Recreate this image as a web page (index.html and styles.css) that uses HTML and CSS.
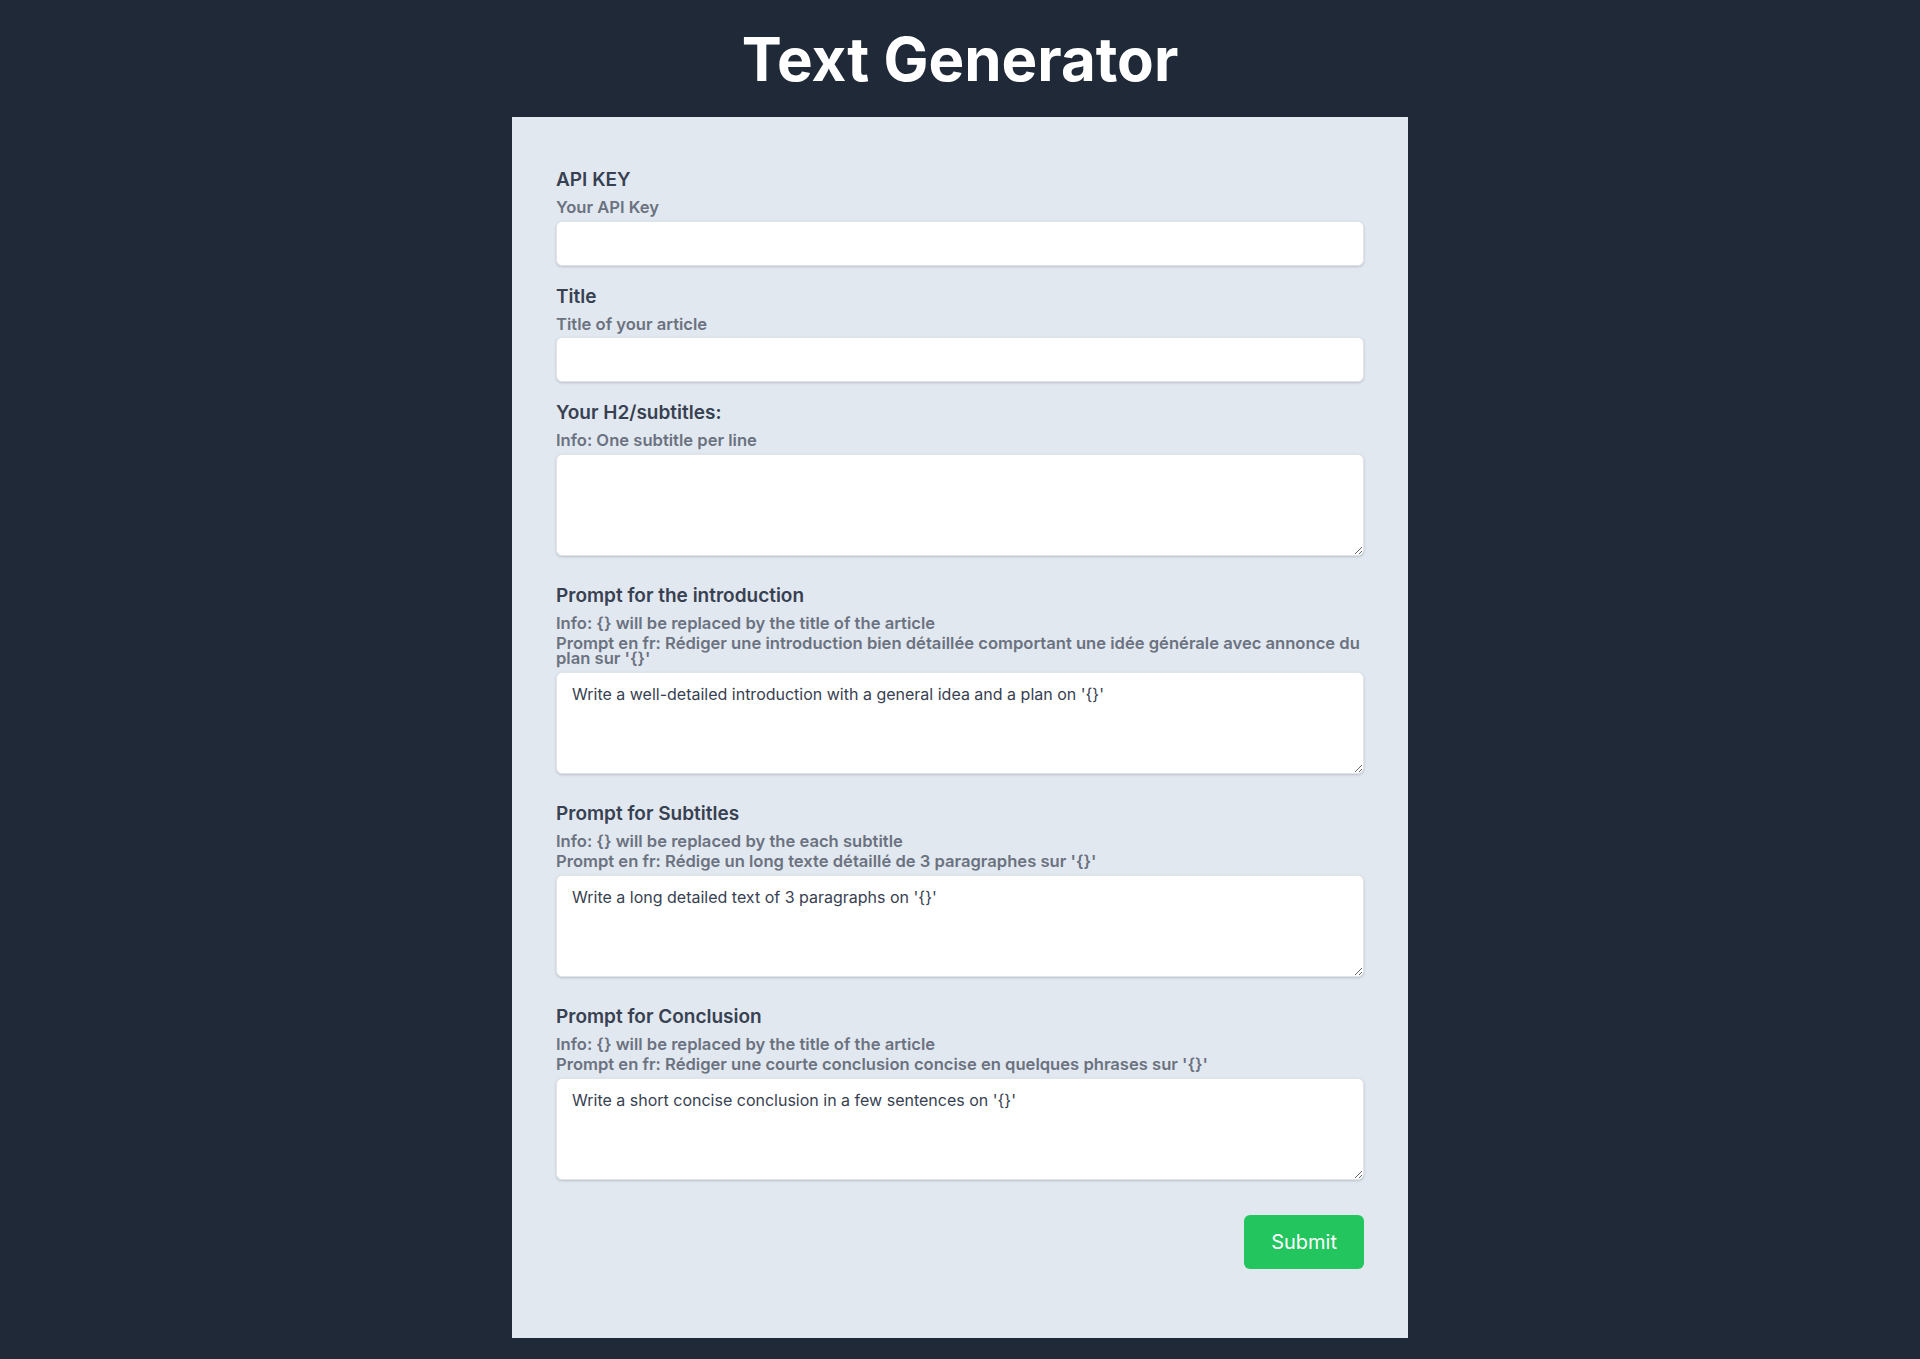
FILE: index.html
```html
<!DOCTYPE html>
<html lang="en">
<head>
<meta charset="utf-8">
<title>Text Generator</title>
<link rel="stylesheet" href="styles.css">
</head>
<body>
<main class="page">
  <h1 class="title">Text Generator</h1>
  <form class="card">
    <div class="field">
      <label class="label" for="apikey">API KEY</label>
      <p class="sub">Your API Key</p>
      <input class="input" id="apikey" type="text">
    </div>
    <div class="field">
      <label class="label" for="title">Title</label>
      <p class="sub">Title of your article</p>
      <input class="input" id="title" type="text">
    </div>
    <div class="field">
      <label class="label" for="h2">Your H2/subtitles:</label>
      <p class="sub">Info: One subtitle per line</p>
      <textarea class="area" id="h2"></textarea>
    </div>
    <div class="field">
      <label class="label" for="intro">Prompt for the introduction</label>
      <p class="sub">Info: {} will be replaced by the title of the article</p>
      <p class="sub">Prompt en fr: Rédiger une introduction bien détaillée comportant une idée générale avec annonce du plan sur '{}'</p>
      <textarea class="area" id="intro">Write a well-detailed introduction with a general idea and a plan on '{}'</textarea>
    </div>
    <div class="field">
      <label class="label" for="subs">Prompt for Subtitles</label>
      <p class="sub">Info: {} will be replaced by the each subtitle</p>
      <p class="sub">Prompt en fr: Rédige un long texte détaillé de 3 paragraphes sur '{}'</p>
      <textarea class="area" id="subs">Write a long detailed text of 3 paragraphs on '{}'</textarea>
    </div>
    <div class="field">
      <label class="label" for="concl">Prompt for Conclusion</label>
      <p class="sub">Info: {} will be replaced by the title of the article</p>
      <p class="sub">Prompt en fr: Rédiger une courte conclusion concise en quelques phrases sur '{}'</p>
      <textarea class="area" id="concl">Write a short concise conclusion in a few sentences on '{}'</textarea>
    </div>
    <div class="actions">
      <button class="submit" type="button">Submit</button>
    </div>
  </form>
</main>
</body>
</html>
```

FILE: styles.css
```css
* {
  box-sizing: border-box;
}

html, body {
  margin: 0;
  padding: 0;
  background: #1f2937;
}

body {
  font-family: Inter, "Noto Sans", "Liberation Sans", sans-serif;
  min-height: 1359px;
}

.page {
  display: flex;
  flex-direction: column;
  align-items: center;
  padding-top: 29px;
}

.title {
  margin: 0 0 28px;
  font-size: 60px;
  line-height: 60px;
  font-weight: 700;
  color: #ffffff;
  letter-spacing: 0;
}

.card {
  width: 896px;
  background: #e2e8f0;
  padding: 49px 44px 69px;
  display: flex;
  flex-direction: column;
}

.field {
  display: flex;
  flex-direction: column;
  gap: 6px;
  margin-bottom: 17px;
}

.label {
  font-size: 19px;
  line-height: 28px;
  font-weight: 600;
  color: #374151;
}

.sub {
  margin: 0;
  font-size: 16.6px;
  line-height: 14.6px;
  font-weight: 600;
  color: #6b7280;
}

.input,
.area {
  width: 100%;
  background: #ffffff;
  border: 1px solid #dfe4ea;
  border-radius: 6px;
  box-shadow: 0 1px 3px rgba(0, 0, 0, 0.12), 0 1px 2px rgba(0, 0, 0, 0.06);
  font-family: Inter, "Noto Sans", "Liberation Sans", sans-serif;
  font-size: 16px;
  line-height: 20px;
  color: #374151;
  outline: none;
}

.input {
  height: 45px;
  padding: 0 15px;
}

.area {
  display: block;
  height: 102px;
  padding: 11px 15px;
  resize: vertical;
  margin-bottom: 9px;
}

.actions {
  display: flex;
  justify-content: flex-end;
  margin-top: 9px;
}

.submit {
  font-family: Inter, "Noto Sans", "Liberation Sans", sans-serif;
  font-size: 20px;
  line-height: 28px;
  font-weight: 400;
  color: #ffffff;
  background: #22c55e;
  border: none;
  border-radius: 6px;
  padding: 13px 27px;
  cursor: pointer;
}
```
